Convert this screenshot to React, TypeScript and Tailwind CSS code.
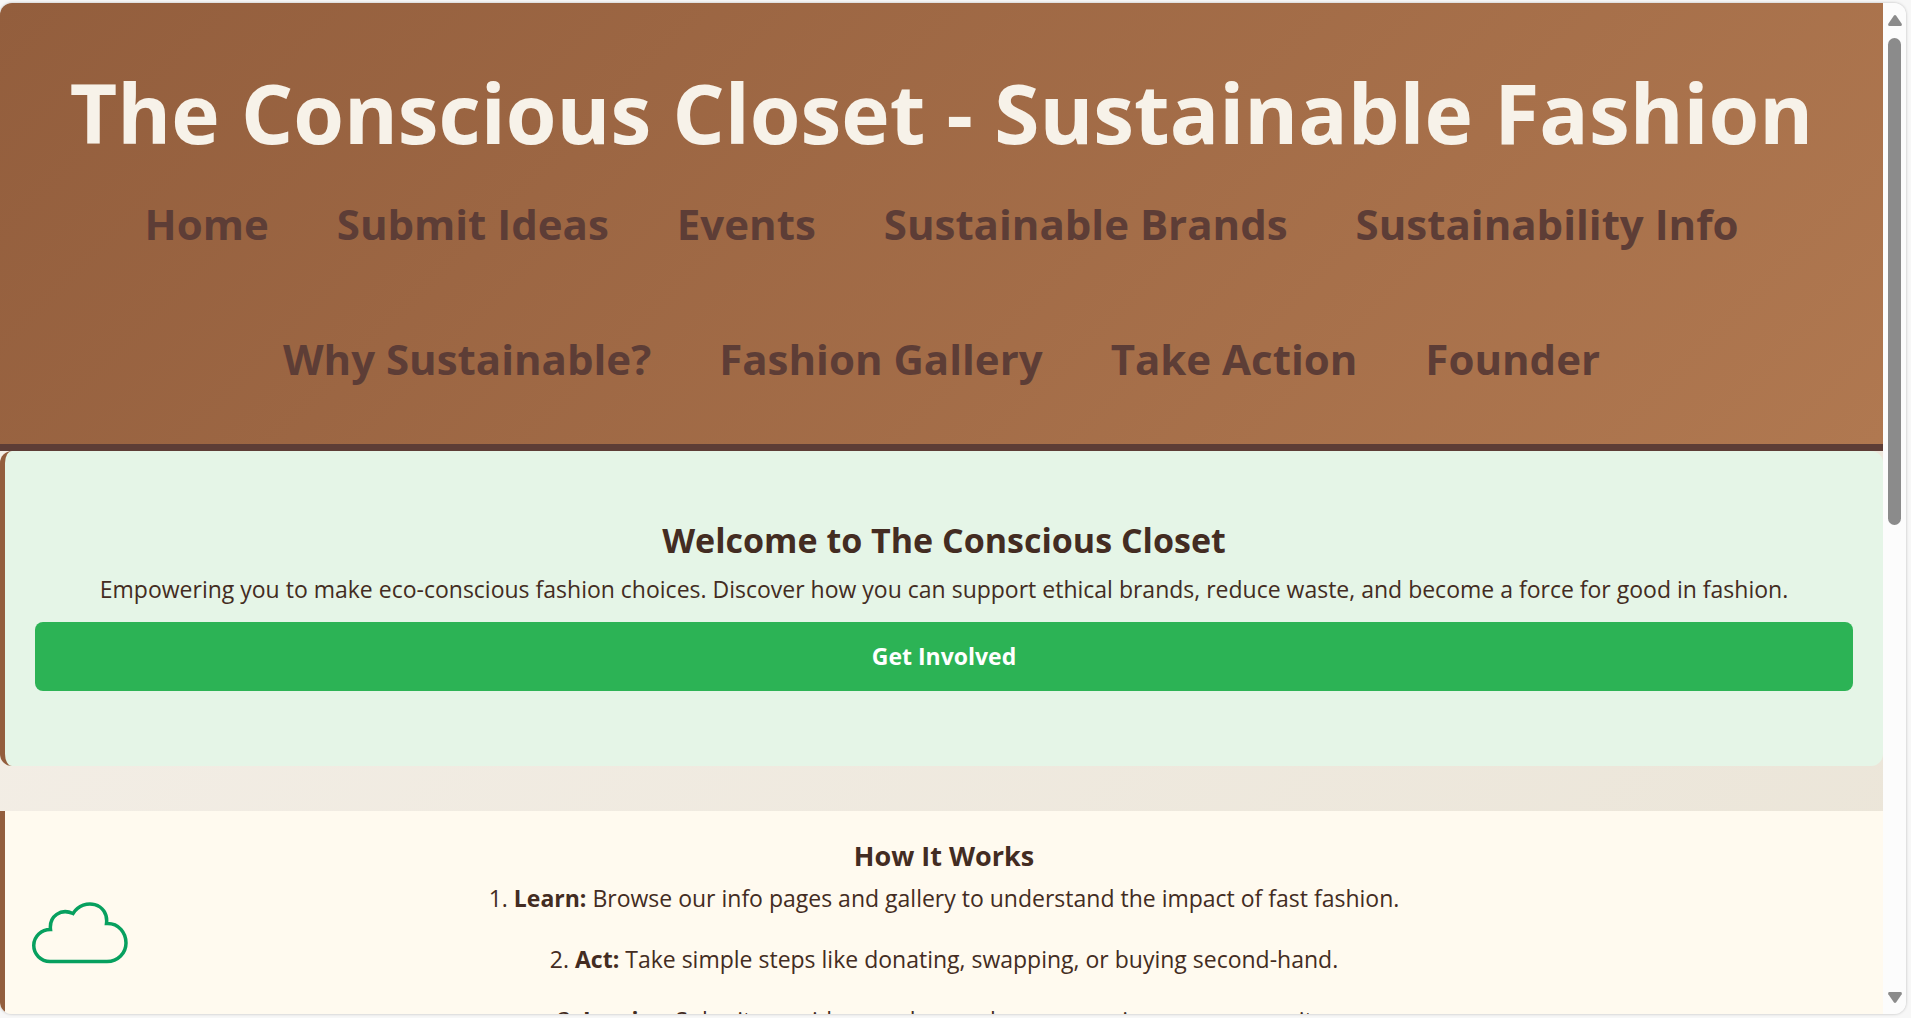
import React from "react";

const navRows: string[][] = [
  ["Home", "Submit Ideas", "Events", "Sustainable Brands", "Sustainability Info"],
  ["Why Sustainable?", "Fashion Gallery", "Take Action", "Founder"],
];

const steps = [
  { name: "Learn:", text: "Browse our info pages and gallery to understand the impact of fast fashion." },
  { name: "Act:", text: "Take simple steps like donating, swapping, or buying second-hand." },
  { name: "Inspire:", text: "Submit your ideas and spread awareness in your community." },
];

function Header() {
  return (
    <header className="border-b-7 border-[#5d3d36] bg-linear-135 from-[#935e3d] to-[#b07850] pt-[59px] pb-[55px]">
      <h1 className="text-center text-[82px] leading-[100px] font-bold text-[#f7f2e9]">
        The Conscious Closet - Sustainable Fashion
      </h1>
      <nav aria-label="Main" className="mt-8 flex flex-col gap-[75px]">
        {navRows.map((row) => (
          <ul key={row[0]} className="flex justify-center gap-[68px]">
            {row.map((item) => (
              <li key={item}>
                <a href="#" className="block text-[42px] leading-[60px] font-bold whitespace-nowrap text-[#5d3d36]">
                  {item}
                </a>
              </li>
            ))}
          </ul>
        ))}
      </nav>
    </header>
  );
}

function Cloud() {
  return (
    <svg viewBox="0 0 96 62" className="absolute top-[91px] left-[27px] h-[62px] w-24" fill="none" stroke="#07a05f" strokeWidth="3.500">
      <path d="M18 59.500 A16.500 16 0 0 1 18.500 27.500 C17 14 29 6 41 11.500 C52 -5 77 1 74.500 21.500 C87 21 94 31 94 41 C94 51 86 59.500 75 59.500 Z" />
    </svg>
  );
}

function ScrollBar() {
  return (
    <div aria-hidden="true" className="flex w-[23px] shrink-0 flex-col items-center bg-[#fcfcfc] pt-3 pb-[11px]">
      <svg viewBox="0 0 14 11" className="h-[11px] w-3.5" fill="#8b8b8b">
        <path d="M5.800 0.800 Q7 -0.600 8.200 0.800 L13.700 8.700 Q14.300 11 12.500 11 H1.500 Q-0.300 11 0.300 8.700 Z" />
      </svg>
      <div className="flex w-[13px] grow flex-col pt-3">
        <div className="h-[51%] rounded-full bg-[#8b8b8b]" />
      </div>
      <svg viewBox="0 0 14 11" className="h-[11px] w-3.5 rotate-180" fill="#8b8b8b">
        <path d="M5.800 0.800 Q7 -0.600 8.200 0.800 L13.700 8.700 Q14.300 11 12.500 11 H1.500 Q-0.300 11 0.300 8.700 Z" />
      </svg>
    </div>
  );
}

export default function App() {
  return (
    <div className="flex h-screen bg-[#f7f7f7] pt-[3px] pr-[5px] pb-1 font-['Open_Sans','Noto_Sans',sans-serif] text-[#432c22]">
      <div className="flex grow overflow-hidden rounded-xl shadow-[0_0_3px_rgba(0,0,0,0.25)]">
        <main className="min-w-0 grow overflow-hidden bg-linear-135 from-[#f5f0e9] to-[#ebe5d8]">
          <Header />
          <section className="rounded-xl border-l-5 border-[#935e3d] bg-[#e5f5e7] px-[30px] pt-16 pb-[75px] text-center">
            <h2 className="text-[34px] leading-[50px] font-bold">Welcome to The Conscious Closet</h2>
            <p className="mt-1 text-[23px] leading-[40px]">
              Empowering you to make eco-conscious fashion choices. Discover how you can support ethical brands, reduce
              waste, and become a force for good in fashion.
            </p>
            <button
              type="button"
              className="mt-[13px] block w-full rounded-lg bg-[#2cb355] text-[23px] leading-[69px] font-bold text-white"
            >
              Get Involved
            </button>
          </section>
          <section className="relative mt-[45px] border-l-5 border-[#935e3d] bg-[#fffaef] px-[30px] pt-[25px] pb-16 text-center">
            <Cloud />
            <h3 className="text-[27px] leading-[40px] font-bold">How It Works</h3>
            <ol className="mt-[2px] flex flex-col gap-[21px] text-[23px] leading-[40px]">
              {steps.map((step, i) => (
                <li key={step.name}>
                  {i + 1}. <strong>{step.name}</strong> {step.text}
                </li>
              ))}
            </ol>
          </section>
        </main>
        <ScrollBar />
      </div>
    </div>
  );
}
